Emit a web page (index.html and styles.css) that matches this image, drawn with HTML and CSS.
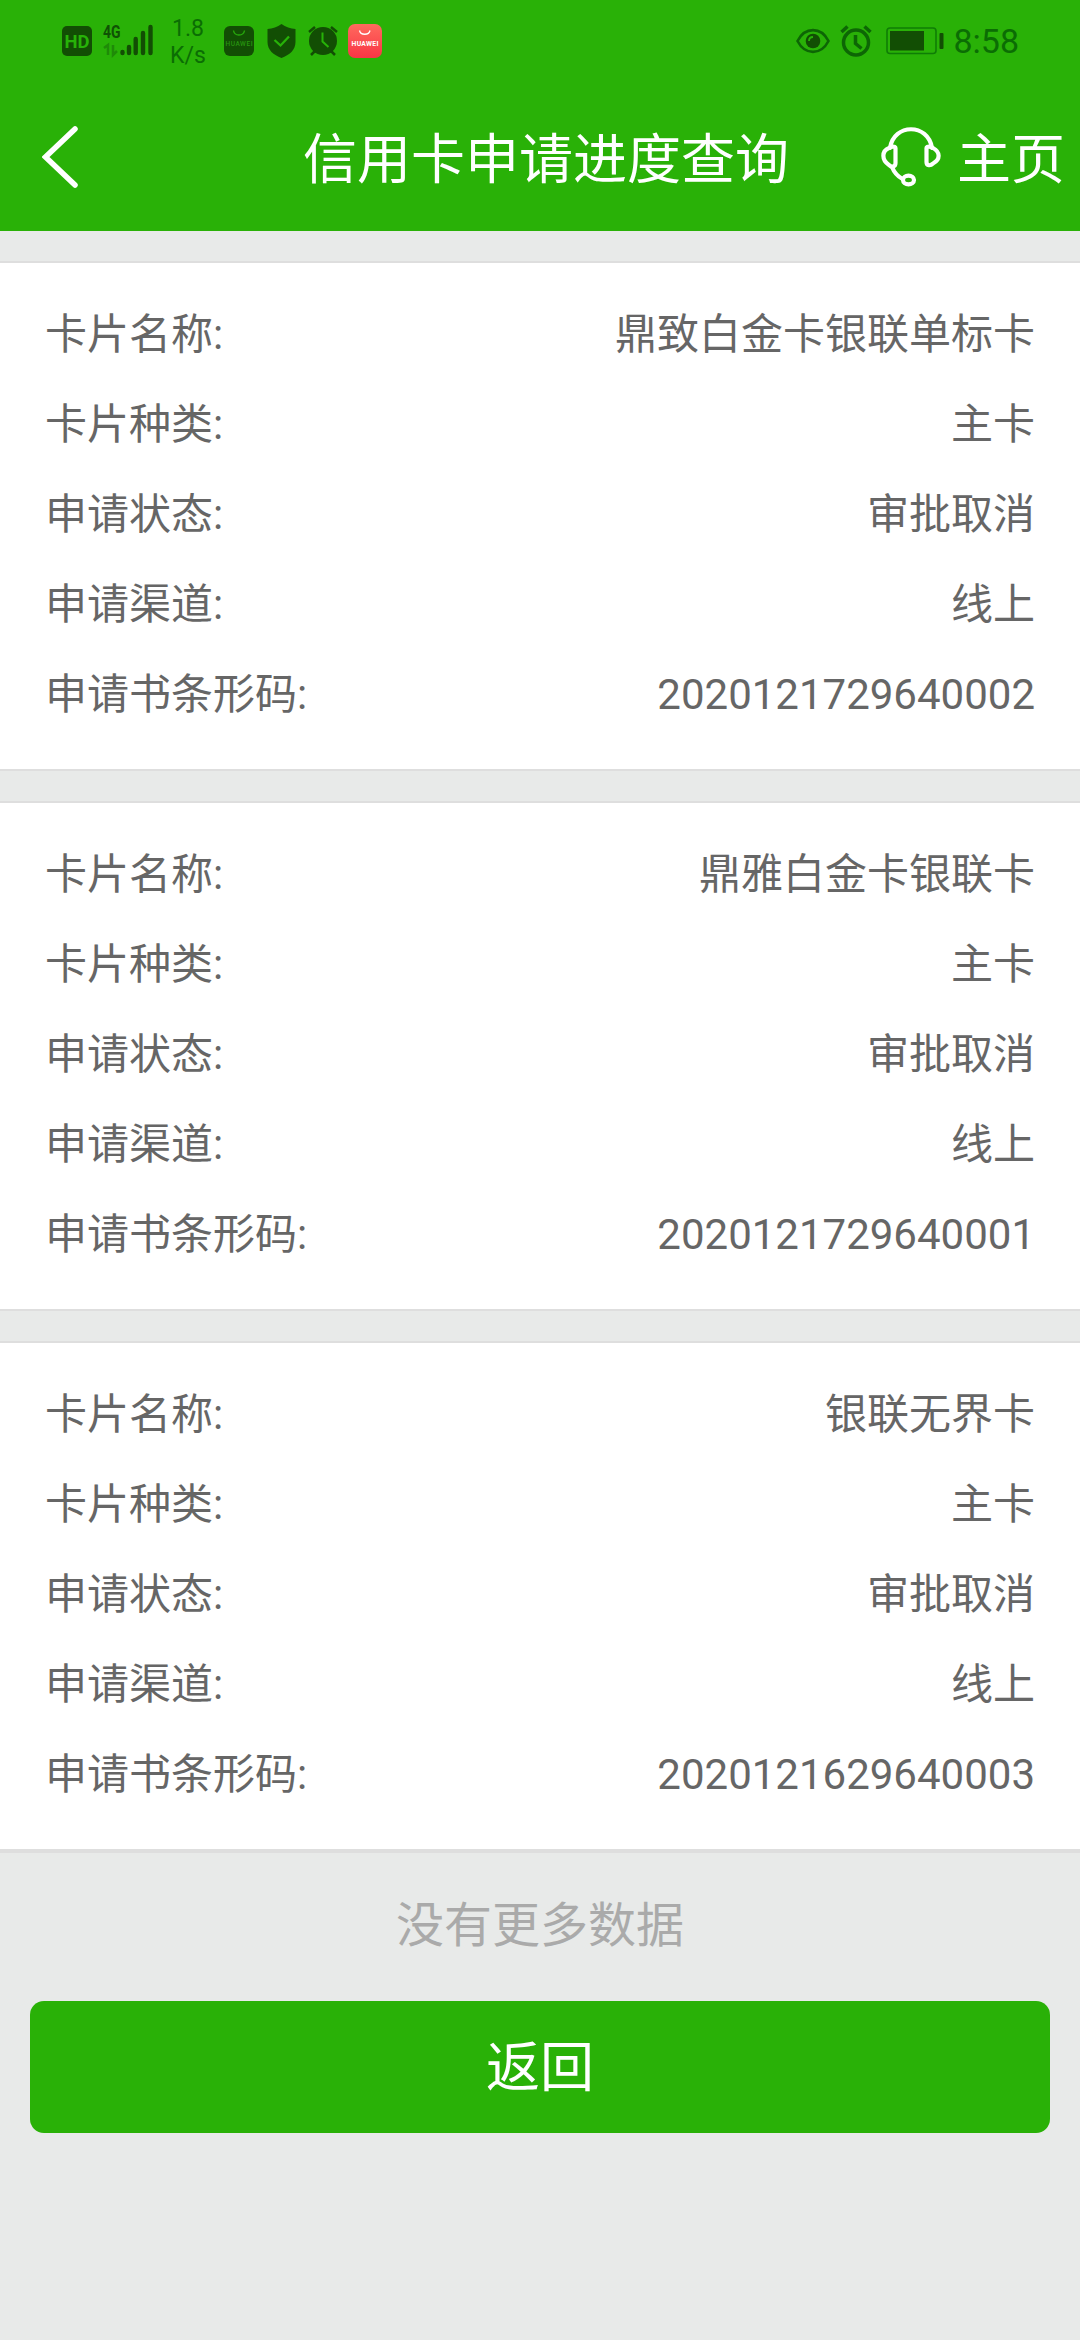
FILE: index.html
```html
<!DOCTYPE html>
<html lang="zh-CN">
<head>
  <meta charset="UTF-8" />
  <title>信用卡申请进度查询</title>
  <link rel="stylesheet" href="styles.css">
</head>
<body>

  <!-- Status bar -->
  <div class="status-bar">
    <div class="status-left">
      <svg class="hd" width="30" height="30" viewBox="0 0 30 30">
        <rect width="30" height="30" rx="5" fill="#124e04" />
        <text x="15" y="22" text-anchor="middle" textLength="25" lengthAdjust="spacingAndGlyphs" font-size="19" font-weight="700" fill="#27b208">HD</text>
      </svg>
      <svg class="signal" width="50" height="46" viewBox="0 -6 50 46">
        <text x="0" y="14" textLength="17.500" lengthAdjust="spacingAndGlyphs" font-size="19" font-weight="700" fill="#0f5204">4G</text>
        <g fill="none" stroke="#1f8a08" stroke-width="2.500">
          <path d="M1 24l4-3v10M10 21v10l4-4" />
        </g>
        <g stroke="#124e04" stroke-width="4.400" stroke-linecap="round">
          <path d="M19.500 28v1M26 23v6M32.700 15v14M40 9v20M47.500 3v26" />
        </g>
      </svg>
      <div class="net-speed">
        <span>1.8</span>
        <span>K/s</span>
      </div>
      <svg class="bag" width="30" height="30" viewBox="0 0 30 30">
        <rect width="30" height="30" rx="6" fill="#124e04" />
        <path d="M9.500 4.500c1 6 10 6 11 0" fill="none" stroke="#27a80c" stroke-width="1.400" />
        <text x="15" y="20" text-anchor="middle" textLength="27" font-size="6.500" font-weight="500" fill="#27940f">HUAWEI</text>
      </svg>
      <svg class="shield" width="29" height="34" viewBox="0 0 29 34">
        <path d="M14.500 0c4 3 9 4.500 14 5v13c0 8-6 13-14 16C6.500 31 .5 26 .5 18V5c5-.5 10-2 14-5z" fill="#124e04" />
        <path d="M7.500 16l6 5.500L22 12.500" fill="none" stroke="#27b208" stroke-width="2.300" />
      </svg>
      <svg class="alarm" width="30" height="30" viewBox="0 0 30 30">
        <circle cx="15" cy="15" r="14" fill="#124e04" />
        <path d="M1 6l6-5M29 6l-6-5M3 29l4-4M27 29l-4-4" stroke="#124e04" stroke-width="2.500" />
        <path d="M14.500 6.500v9l6 5.500" fill="none" stroke="#27b208" stroke-width="2" />
      </svg>
      <svg class="bag-red" width="34" height="34" viewBox="0 0 34 34">
        <defs>
          <linearGradient id="redFill" x1="0" y1="0" x2="0" y2="1">
            <stop offset="0" stop-color="#ff6a5e" />
            <stop offset="1" stop-color="#f93545" />
          </linearGradient>
        </defs>
        <rect width="34" height="34" rx="7" fill="url(#redFill)" />
        <path d="M11.500 6.500c1 5 9.500 5 10.500 0" fill="none" stroke="#fff" stroke-width="1.300" />
        <text x="17" y="22" text-anchor="middle" textLength="27" font-size="6.800" font-weight="700" fill="#fff">HUAWEI</text>
      </svg>
    </div>

    <div class="status-right">
      <svg class="eye" width="34" height="28" viewBox="0 0 34 28">
        <path d="M1.500 14C9-.5 25-.5 32.500 14 25 28.500 9 28.500 1.500 14z" fill="none" stroke="#0d6605" stroke-width="2.600" />
        <circle cx="17" cy="14" r="7.300" fill="#124e04" />
        <path d="M13 14c0-2.500 1.500-4 4-4" fill="none" stroke="#27b208" stroke-width="1.800" />
      </svg>
      <svg class="alarm-line" width="32" height="32" viewBox="0 0 32 32">
        <g fill="none" stroke="#0d6605" stroke-width="3.500">
          <circle cx="16" cy="17.500" r="12.500" />
          <path d="M1.500 7l6-5.500M30.500 7l-6-5.500M15.500 10v8.500l6 5" />
        </g>
      </svg>
      <svg class="battery" width="58" height="28" viewBox="0 0 58 28">
        <rect x="1" y="1" width="49" height="25.500" rx="3" fill="none" stroke="#0f7d06" stroke-width="1.600" />
        <rect x="4" y="4" width="34" height="19.500" fill="#124e04" />
        <rect x="53.500" y="6" width="4" height="16" rx="1" fill="#124e04" />
      </svg>
      <span class="clock">8:58</span>
    </div>
  </div>

  <!-- Header -->
  <div class="header">
    <svg class="back" width="36" height="62" viewBox="0 0 36 62">
      <path d="M33 3L3.500 31 33 59" fill="none" stroke="#fff" stroke-width="5.500" stroke-linecap="round" />
    </svg>
    <div class="title">信用卡申请进度查询</div>
    <svg class="service" width="60" height="60" viewBox="0 0 60 60">
      <g fill="none" stroke="#fff" stroke-width="4.200" stroke-linecap="round" stroke-linejoin="round">
        <path d="M9 21C13-4 47-4 51 21" />
        <path d="M14.500 21v15c0 4-4 4.500-6.500 2C.5 33 .5 24 8 21c2-1.500 6.500-2 6.500 0z" />
        <path d="M45.500 21v14c0 4 4 4 6.500 1.500 7.500-4 7.500-11.500 0-15.500-2-1.500-6.500-2-6.500 0z" />
        <path d="M11 40c2 5 5 9 10.500 12" />
        <ellipse cx="27.500" cy="53" rx="5.500" ry="4.300" />
      </g>
    </svg>
    <div class="home">主页</div>
  </div>

  <!-- Applications -->
  <div class="list">
    <div class="card">
      <div class="row"><span>卡片名称:</span><span>鼎致白金卡银联单标卡</span></div>
      <div class="row"><span>卡片种类:</span><span>主卡</span></div>
      <div class="row"><span>申请状态:</span><span>审批取消</span></div>
      <div class="row"><span>申请渠道:</span><span>线上</span></div>
      <div class="row"><span>申请书条形码:</span><span>2020121729640002</span></div>
    </div>

    <div class="card">
      <div class="row"><span>卡片名称:</span><span>鼎雅白金卡银联卡</span></div>
      <div class="row"><span>卡片种类:</span><span>主卡</span></div>
      <div class="row"><span>申请状态:</span><span>审批取消</span></div>
      <div class="row"><span>申请渠道:</span><span>线上</span></div>
      <div class="row"><span>申请书条形码:</span><span>2020121729640001</span></div>
    </div>

    <div class="card">
      <div class="row"><span>卡片名称:</span><span>银联无界卡</span></div>
      <div class="row"><span>卡片种类:</span><span>主卡</span></div>
      <div class="row"><span>申请状态:</span><span>审批取消</span></div>
      <div class="row"><span>申请渠道:</span><span>线上</span></div>
      <div class="row"><span>申请书条形码:</span><span>2020121629640003</span></div>
    </div>
  </div>

  <p class="no-more">没有更多数据</p>
  <button class="return-btn">返回</button>

</body>
</html>
```
FILE: styles.css
```css
* {
  box-sizing: border-box;
}

body {
  margin: 0;
  font-family: Roboto, "Noto Sans CJK SC", sans-serif;
  background: #e8eae9;
  min-height: 100vh;
}

svg {
  display: block;
  flex: none;
}

/* Status bar */
.status-bar {
  height: 81px;
  background: #29b107;
  display: flex;
  justify-content: space-between;
  align-items: center;
  padding: 0 61px 0 62px;
}

.status-left,
.status-right {
  display: flex;
  align-items: center;
}

.signal {
  margin-left: 11px;
}

.net-speed {
  width: 34px;
  margin-left: 18px;
  padding-top: 2px;
  display: flex;
  flex-direction: column;
  align-items: center;
  font-size: 23px;
  line-height: 27px;
  color: #0b6d04;
}

.bag {
  margin-left: 19px;
}

.shield {
  margin-left: 13px;
}

.alarm {
  margin-left: 12px;
}

.bag-red {
  margin-left: 10px;
}

.alarm-line {
  margin-left: 10px;
}

.battery {
  margin-left: 14px;
}

.clock {
  margin-left: 9px;
  font-size: 34px;
  line-height: 40px;
  color: #0b6d04;
}

/* Header */
.header {
  height: 150px;
  background: #29b107;
  display: flex;
  align-items: center;
  padding: 2px 15px 0 42px;
  color: #fff;
  font-size: 54px;
  line-height: 80px;
}

.title {
  margin-left: 225px;
  padding-top: 8px;
}

.service {
  margin-left: auto;
}

.home {
  margin-left: 16px;
  padding-top: 8px;
}

/* Application cards */
.list {
  padding-top: 30px;
  border-bottom: 2px solid #dedede;
}

.card {
  height: 510px;
  background: #fff;
  border-top: 2px solid #dedede;
  border-bottom: 2px solid #dedede;
  padding: 27px 45px 0;
}

.card + .card {
  margin-top: 30px;
}

.row {
  height: 90px;
  display: flex;
  justify-content: space-between;
  font-size: 42px;
  line-height: 90px;
  color: #666;
}

.no-more {
  margin: 0;
  padding-top: 38px;
  height: 148px;
  font-size: 48px;
  line-height: 70px;
  text-align: center;
  color: #aaa;
}

.return-btn {
  display: block;
  width: 1020px;
  height: 132px;
  margin: 0 auto;
  padding: 3px 0 0;
  border: none;
  border-radius: 14px;
  background: #29b107;
  color: #fff;
  font-family: inherit;
  font-size: 54px;
  line-height: 129px;
  cursor: pointer;
}
```
